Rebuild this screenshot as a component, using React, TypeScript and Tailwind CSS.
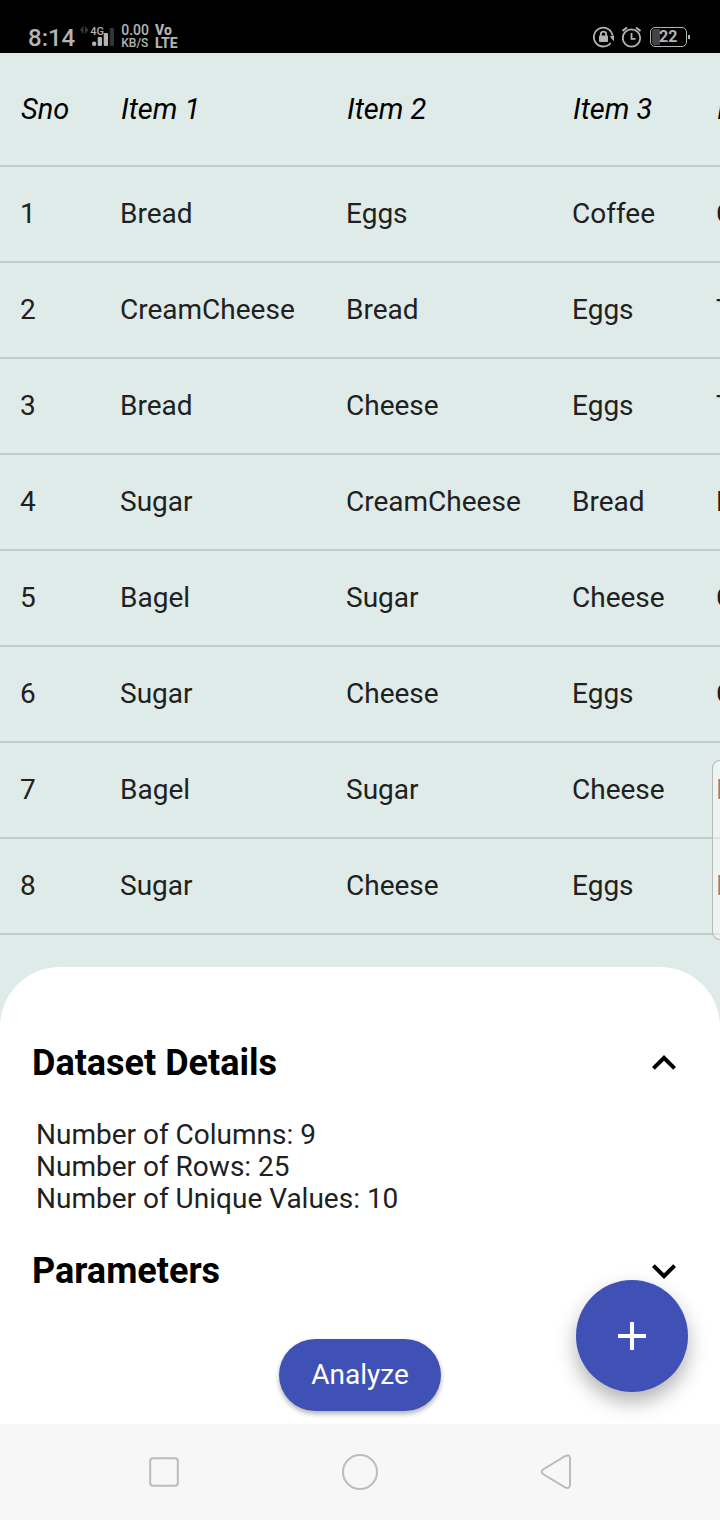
import { useState, type ReactNode } from "react";
import { MdAdd, MdKeyboardArrowDown, MdKeyboardArrowUp } from "react-icons/md";

const columns = ["Sno", "Item 1", "Item 2", "Item 3", "Item 4"];

const rows = [
  ["1", "Bread", "Eggs", "Coffee", "Cheese"],
  ["2", "CreamCheese", "Bread", "Eggs", "Tea"],
  ["3", "Bread", "Cheese", "Eggs", "Tea"],
  ["4", "Sugar", "CreamCheese", "Bread", "Eggs"],
  ["5", "Bagel", "Sugar", "Cheese", "Coffee"],
  ["6", "Sugar", "Cheese", "Eggs", "Coffee"],
  ["7", "Bagel", "Sugar", "Cheese", "Bread"],
  ["8", "Sugar", "Cheese", "Eggs", "Bread"],
];

function StatusBar() {
  return (
    <header className="flex h-[53px] items-end justify-between bg-black pr-[30px] pb-[3px] pl-7 text-[#b4b4b4]">
      <div className="flex items-end">
        <span className="text-2xl leading-6 font-medium">8:14</span>
        <div className="relative mb-px ml-[5px]">
          <svg className="block h-6 w-9" viewBox="0 0 36 24" aria-hidden="true">
            <path d="M0 5l3.5-4v8zM8.5 5L5 1v8z" fill="#3a3a3a" />
            <rect x="12" y="16.5" width="4.3" height="4.5" rx="2" fill="#b4b4b4" />
            <rect x="17.7" y="12" width="4.3" height="9" rx="1" fill="#b4b4b4" />
            <rect x="23.7" y="8" width="4.3" height="13" rx="1" fill="#b4b4b4" />
            <rect x="29.7" y="3" width="4.3" height="18" rx="1" fill="#333333" />
          </svg>
          <span className="absolute top-px left-[10px] text-[11px] leading-3 font-medium">4G</span>
        </div>
        <div className="ml-[5px] font-medium">
          <div className="text-sm leading-[13px]">0.00</div>
          <div className="text-xs leading-[13px]">KB/S</div>
        </div>
        <div className="ml-[6px] text-sm leading-[13px] font-extrabold">
          <div>Vo</div>
          <div>LTE</div>
        </div>
      </div>
      <div className="flex items-center gap-2 pb-[2px]">
        <svg className="h-[22px] w-[21px]" viewBox="0 0 21 22" fill="none" stroke="#b4b4b4" strokeWidth="1.8" aria-hidden="true">
          <path d="M19.5 9.3A9.4 9.4 0 1 0 17.6 17" />
          <path d="M16.8 10.5L21 9.3V15.3z" fill="#b4b4b4" stroke="none" />
          <rect x="6" y="9.5" width="9" height="6.5" rx="0.8" fill="#b4b4b4" stroke="none" />
          <path d="M7.8 10V8.4a2.7 2.7 0 0 1 5.4 0V10" />
        </svg>
        <svg className="h-[22px] w-[20px]" viewBox="0 0 20 22" fill="none" stroke="#b4b4b4" strokeWidth="1.8" aria-hidden="true">
          <circle cx="9.5" cy="12" r="8.7" />
          <path d="M9.5 7v5.8h4" />
          <path d="M.5 5L5 1.5M18.5 5L14 1.5" strokeWidth="2" />
        </svg>
        <div className="flex items-center">
          <div className="flex h-5 w-[37px] rounded-[5px] border border-[#b4b4b4] p-px">
            <div className="w-[8px] rounded-l-[3px] bg-[#444444]" />
            <span className="-ml-px text-base leading-4 font-bold">22</span>
          </div>
          <div className="ml-px h-1 w-[2px] bg-[#b4b4b4]" />
        </div>
      </div>
    </header>
  );
}

function DatasetTable() {
  return (
    <div className="overflow-x-auto [scrollbar-width:none]">
      <table className="w-[942px] table-fixed border-separate border-spacing-0 text-left text-[28px] leading-8 whitespace-nowrap text-[#212121]">
        <colgroup>
          <col className="w-[120px]" />
          <col className="w-[226px]" />
          <col className="w-[226px]" />
          <col className="w-[144px]" />
          <col className="w-[226px]" />
        </colgroup>
        <thead>
          <tr className="h-[114px] text-black">
            {columns.map((name) => (
              <th
                key={name}
                scope="col"
                className="border-b-2 border-[#c1cdca] p-0 pl-px text-[29px] font-normal italic first:pl-[21px]"
              >
                {name}
              </th>
            ))}
          </tr>
        </thead>
        <tbody>
          {rows.map((row) => (
            <tr key={row[0]} className="h-24">
              {row.map((value, i) => (
                <td key={i} className="border-b-2 border-[#c1cdca] p-0 first:pl-5">
                  {value}
                </td>
              ))}
            </tr>
          ))}
        </tbody>
      </table>
    </div>
  );
}

function Section({ title, initiallyOpen, children }: { title: string; initiallyOpen: boolean; children: ReactNode }) {
  const [open, setOpen] = useState(initiallyOpen);
  const Arrow = open ? MdKeyboardArrowUp : MdKeyboardArrowDown;
  return (
    <section>
      <h2>
        <button
          type="button"
          aria-expanded={open}
          onClick={() => setOpen(!open)}
          className="flex h-20 w-full items-center justify-between px-8 text-left text-4xl leading-10 font-bold text-black"
        >
          {title}
          <Arrow className="h-12 w-12" />
        </button>
      </h2>
      {open && <div className="px-9 py-4 text-[28px] leading-8 text-[#212121]">{children}</div>}
    </section>
  );
}

function NavigationBar() {
  const key = "flex flex-1 items-center justify-center";
  return (
    <nav className="flex h-24 bg-[#f7f7f7] px-[66px] text-[#bcbcbc]">
      <button type="button" aria-label="Recent apps" className={key}>
        <svg className="h-10 w-10" viewBox="0 0 40 40" fill="none" stroke="currentColor" strokeWidth="2">
          <rect x="6.2" y="6.2" width="27.6" height="27.6" rx="3" />
        </svg>
      </button>
      <button type="button" aria-label="Home" className={key}>
        <svg className="h-10 w-10" viewBox="0 0 40 40" fill="none" stroke="currentColor" strokeWidth="2">
          <circle cx="20" cy="20" r="17" />
        </svg>
      </button>
      <button type="button" aria-label="Back" className={key}>
        <svg className="h-10 w-10" viewBox="0 0 40 40" fill="none" stroke="currentColor" strokeWidth="2">
          <path d="M7 17.5L29 4.2Q33.500 2 34 6V33Q33.500 37.500 29 35.300L7 22Q4.500 19.750 7 17.500Z" />
        </svg>
      </button>
    </nav>
  );
}

export default function App() {
  return (
    <div className="flex min-h-screen flex-col bg-[#dfebe8] font-['Roboto',sans-serif] antialiased">
      <StatusBar />
      <main className="relative flex flex-1 flex-col">
        <DatasetTable />
        <div className="mt-8 flex flex-1 flex-col rounded-t-[60px] bg-white pt-14 pb-3">
          <Section title="Dataset Details" initiallyOpen={true}>
            <p>Number of Columns: 9</p>
            <p>Number of Rows: 25</p>
            <p>Number of Unique Values: 10</p>
          </Section>
          <Section title="Parameters" initiallyOpen={false}>
            <p>Minimum Support</p>
          </Section>
          <button
            type="button"
            className="mt-7 h-[72px] self-center rounded-full bg-[#3f51b5] px-8 text-[28px] leading-8 text-white shadow-[0_3px_5px_rgba(0,0,0,0.3)]"
          >
            Analyze
          </button>
        </div>
        <button
          type="button"
          aria-label="Add"
          className="absolute right-8 bottom-8 flex h-28 w-28 items-center justify-center rounded-full bg-[#3f51b5] text-white shadow-[0_10px_20px_rgba(0,0,0,0.3)]"
        >
          <MdAdd className="h-12 w-12" />
        </button>
        <div className="absolute top-[707px] right-0 h-[180px] w-2 rounded-l-lg border border-r-0 border-[#b4bab8] bg-white/45" />
      </main>
      <NavigationBar />
    </div>
  );
}
